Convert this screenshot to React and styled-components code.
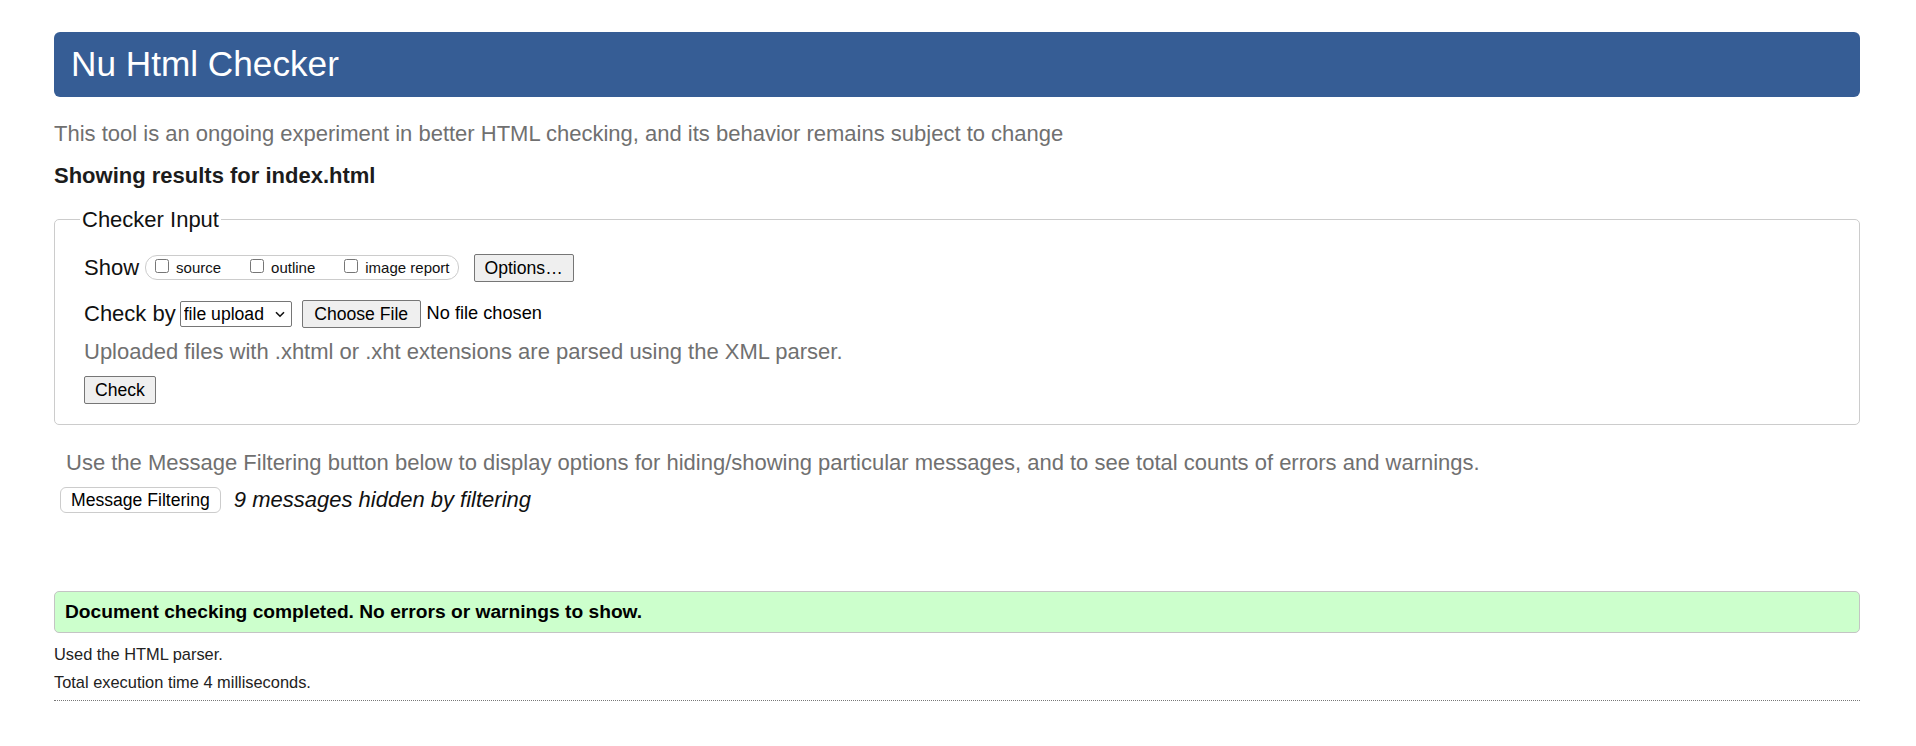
import React from "react";
import styled, { createGlobalStyle } from "styled-components";

const Global = createGlobalStyle`
  html, body { margin: 0; padding: 0; background: #fff; }
  body {
    font-family: "Liberation Sans", Arial, sans-serif;
    font-size: 17.6px;
    color: #000;
  }
  * { box-sizing: border-box; }
`;

const Page = styled.main`
  display: flex;
  flex-direction: column;
  padding: 32px 56px 40px 54px;
`;

const Title = styled.h1`
  margin: 0;
  background: #365d95;
  color: #fff;
  font-weight: normal;
  font-size: 35.2px;
  line-height: 40.5px;
  padding: 12px 17px;
  border-radius: 6px;
`;

const Text = styled.p`
  margin: ${(p) => p.$mt || 0}px 0 0 ${(p) => p.$indent || 0}px;
  font-size: ${(p) => p.$size || 22}px;
  line-height: 1.149;
  color: ${(p) => p.$color || "#111"};
  font-weight: ${(p) => (p.$bold ? "bold" : "normal")};
  font-style: ${(p) => (p.$italic ? "italic" : "normal")};
`;

const Fieldset = styled.fieldset`
  margin: 18.5px 0 0;
  border: 1px solid #cccccc;
  border-radius: 5px;
  padding: 0 29px 20px;
  min-width: 0;
`;

const Legend = styled.legend`
  font-size: 22px;
  line-height: 1.149;
  padding: 0 2px;
  margin-left: -4px;
  color: #111;
`;

const Column = styled.div`
  display: flex;
  flex-direction: column;
  align-items: flex-start;
`;

const Row = styled.div`
  display: flex;
  align-items: center;
  margin-top: ${(p) => p.$mt || 0}px;
  padding-left: ${(p) => p.$indent || 0}px;
  height: 28px;
`;

const RowLabel = styled.span`
  font-size: 22px;
  color: #111;
  margin-right: ${(p) => p.$gap || 6}px;
`;

const Pill = styled.span`
  display: inline-flex;
  align-items: center;
  gap: 29px;
  height: 25px;
  padding: 0 8px 0 9px;
  border: 1px solid #cccccc;
  border-radius: 12px;
`;

const CheckItem = styled.label`
  display: inline-flex;
  align-items: center;
  gap: 7px;
  font-size: 15px;
  color: #111;
`;

const Box = styled.input.attrs({ type: "checkbox" })`
  appearance: none;
  margin: 0 0 3px 0;
  width: 14px;
  height: 14px;
  border: 1px solid #767676;
  border-radius: 2.5px;
  background: #fff;
`;

const Button = styled.button`
  font-family: "Liberation Sans", Arial, sans-serif;
  font-size: 17.6px;
  line-height: 20px;
  color: #000;
  background: #efefef;
  border: 1px solid #767676;
  border-radius: 2px;
  padding: 3px ${(p) => p.$px || 10}px;
  margin: ${(p) => p.$mt || 0}px 0 0 ${(p) => p.$ml || 0}px;
`;

const SoftButton = styled.button`
  font-family: "Liberation Sans", Arial, sans-serif;
  font-size: 17.6px;
  line-height: 20px;
  color: #000;
  background: #fff;
  border: 1px solid #cccccc;
  border-radius: 6px;
  padding: 2px 10px;
  margin-right: 13px;
`;

const SelectWrap = styled.span`
  position: relative;
  display: inline-flex;
`;

const Select = styled.select`
  appearance: none;
  font-family: "Liberation Sans", Arial, sans-serif;
  font-size: 17.6px;
  color: #000;
  background: #fff;
  border: 1px solid #767676;
  border-radius: 2px;
  height: 26px;
  width: 112px;
  padding: 0 0 0 3px;
`;

const Chevron = styled.svg`
  position: absolute;
  right: 7px;
  top: 10px;
  pointer-events: none;
`;

const FileName = styled.span`
  font-size: 18.2px;
  color: #000;
  margin-left: 6px;
`;

const Success = styled.div`
  margin-top: 77.5px;
  background: #ccffcc;
  border: 1px solid #c4c4c4;
  border-radius: 5px;
  padding: 9px 10px;
  font-size: 19.2px;
  line-height: 22px;
  font-weight: bold;
  color: #000;
`;

const Rule = styled.hr`
  margin: 8px 0 0;
  border: 0;
  border-top: 1px dotted #777;
`;

export default function App() {
  return (
    <>
      <Global />
      <Page>
        <Title>Nu Html Checker</Title>
        <Text $mt={24.5} $color="#707070">
          This tool is an ongoing experiment in better HTML checking, and its behavior remains subject to change
        </Text>
        <Text $mt={16.5} $bold $color="#1c1c1c">
          Showing results for index.html
        </Text>
        <Fieldset>
          <Legend>Checker Input</Legend>
          <Column>
            <Row $mt={22}>
              <RowLabel>Show</RowLabel>
              <Pill>
                <CheckItem>
                  <Box />
                  source
                </CheckItem>
                <CheckItem>
                  <Box />
                  outline
                </CheckItem>
                <CheckItem>
                  <Box />
                  image report
                </CheckItem>
              </Pill>
              <Button $ml={15}>Options…</Button>
            </Row>
            <Row $mt={18}>
              <RowLabel $gap={4}>Check by</RowLabel>
              <SelectWrap>
                <Select defaultValue="file">
                  <option value="file">file upload</option>
                  <option value="address">address</option>
                  <option value="text">text input</option>
                </Select>
                <Chevron width="10" height="7" viewBox="0 0 10 7">
                  <path d="M1 1.2 L5 5.2 L9 1.2" fill="none" stroke="#111" strokeWidth="1.6" />
                </Chevron>
              </SelectWrap>
              <Button $ml={10} $px={11.5}>Choose File</Button>
              <FileName>No file chosen</FileName>
            </Row>
            <Text $mt={11.5} $color="#707070">
              Uploaded files with .xhtml or .xht extensions are parsed using the XML parser.
            </Text>
            <Button $mt={11.5}>Check</Button>
          </Column>
        </Fieldset>
        <Text $mt={24.5} $indent={12} $color="#707070">
          Use the Message Filtering button below to display options for hiding/showing particular messages, and to see total counts of errors and warnings.
        </Text>
        <Row $mt={11} $indent={6}>
          <SoftButton>Message Filtering</SoftButton>
          <Text $italic>9 messages hidden by filtering</Text>
        </Row>
        <Success>Document checking completed. No errors or warnings to show.</Success>
        <Text $mt={11.5} $size={16.4} $color="#222">Used the HTML parser.</Text>
        <Text $mt={9.5} $size={16.4} $color="#222">Total execution time 4 milliseconds.</Text>
        <Rule />
      </Page>
    </>
  );
}
